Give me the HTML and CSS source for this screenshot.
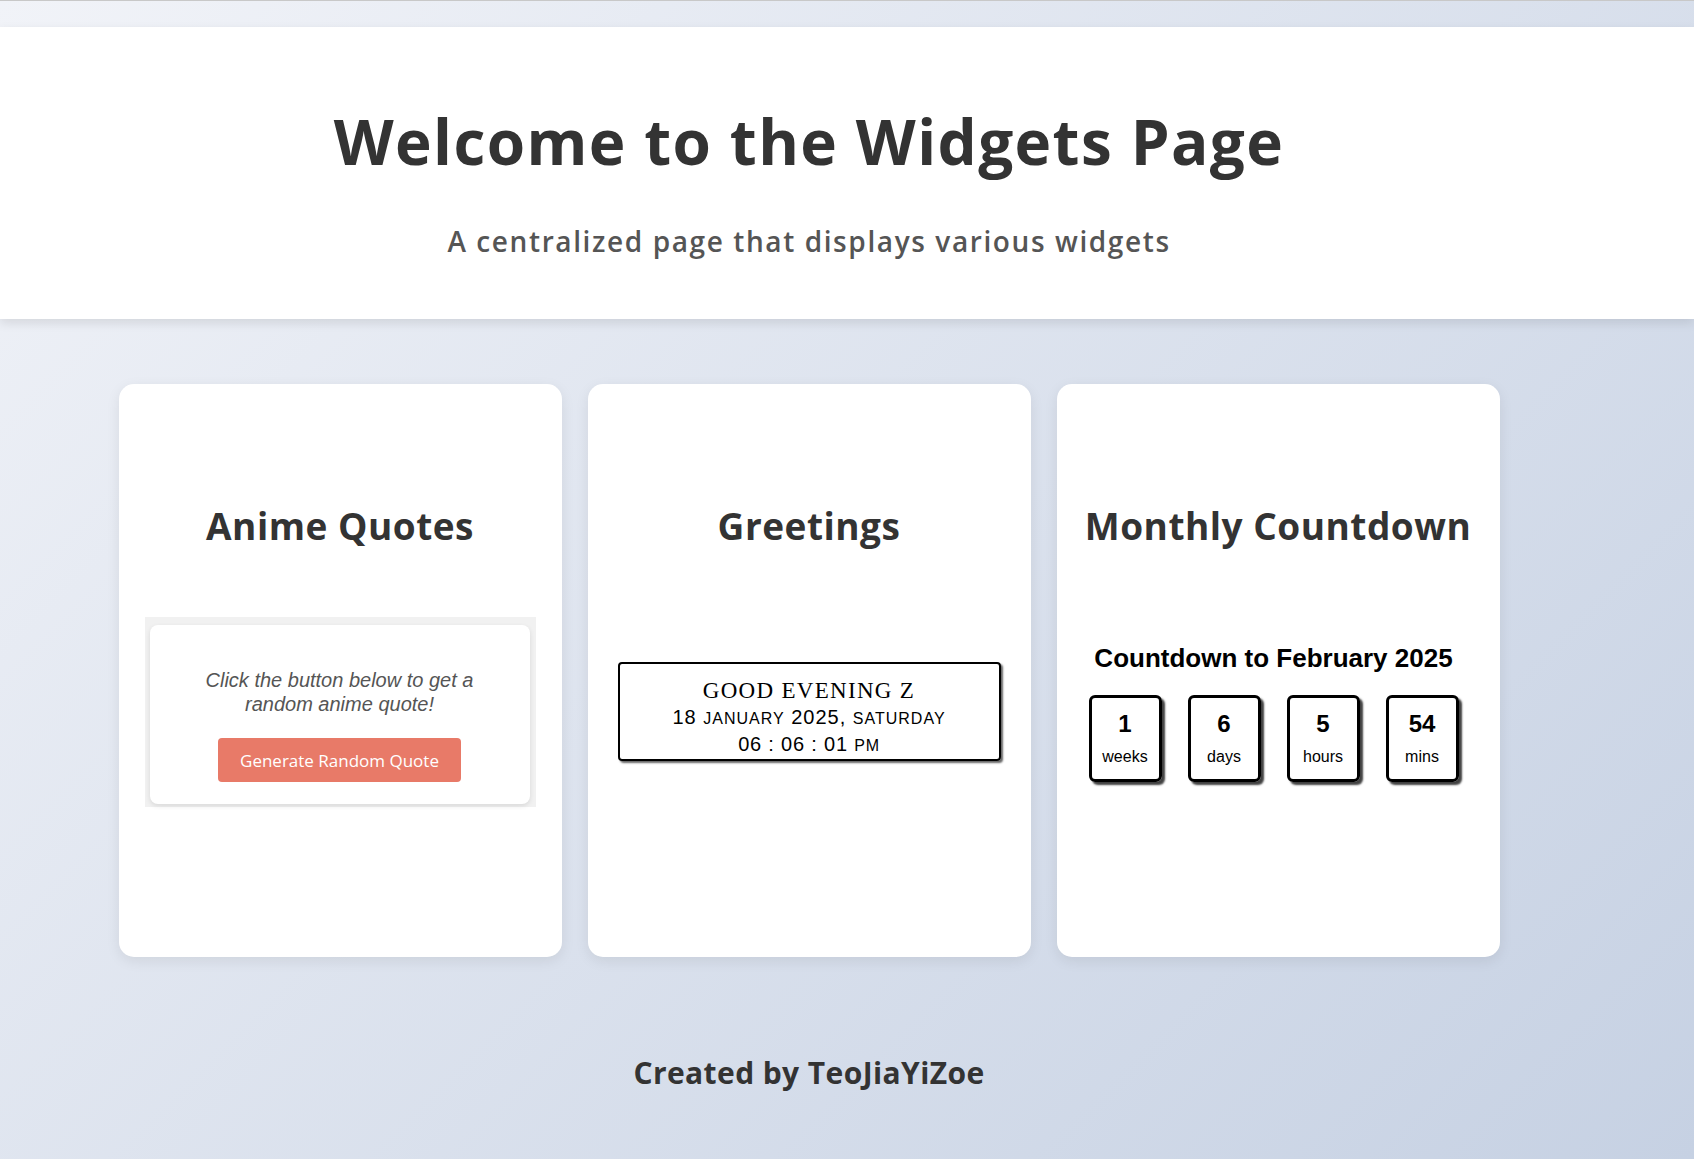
FILE: index.html
```html
<!DOCTYPE html>
<html lang="en">
<head>
<meta charset="utf-8">
<title>Widgets Page</title>
<link rel="stylesheet" href="styles.css">
</head>
<body>
<header class="site-header">
  <h1 class="site-title">Welcome to the Widgets Page</h1>
  <p class="site-subtitle">A centralized page that displays various widgets</p>
</header>

<main class="cards">
  <section class="card">
    <h2 class="card-title">Anime Quotes</h2>
    <div class="card-body">
      <div class="quote-frame">
        <div class="quote-box">
          <p class="quote-text">Click the button below to get a random anime quote!</p>
          <button class="quote-btn" type="button">Generate Random Quote</button>
        </div>
      </div>
    </div>
  </section>

  <section class="card">
    <h2 class="card-title">Greetings</h2>
    <div class="card-body">
      <div class="greet-box">
        <div class="greet-hello">GOOD EVENING Z</div>
        <div class="greet-date">18 <span class="sc">January</span> 2025, <span class="sc">Saturday</span></div>
        <div class="greet-time">06 : 06 : 01 <span class="sc">pm</span></div>
      </div>
    </div>
  </section>

  <section class="card">
    <h2 class="card-title">Monthly Countdown</h2>
    <div class="card-body">
      <div class="countdown">
        <div class="countdown-title">Countdown to February 2025</div>
        <div class="countdown-row">
          <div class="cd-box"><span class="cd-num">1</span><span class="cd-label">weeks</span></div>
          <div class="cd-box"><span class="cd-num">6</span><span class="cd-label">days</span></div>
          <div class="cd-box"><span class="cd-num">5</span><span class="cd-label">hours</span></div>
          <div class="cd-box"><span class="cd-num">54</span><span class="cd-label">mins</span></div>
        </div>
      </div>
    </div>
  </section>
</main>

<footer class="site-footer">Created by TeoJiaYiZoe</footer>
</body>
</html>
```

FILE: styles.css
```css
html {
  min-height: 100%;
}

body {
  margin: 0;
  min-height: 100vh;
  border-top: 1px solid #c8c8c8;
  box-sizing: border-box;
  background: linear-gradient(135deg, #f1f3f8 0%, #c6d1e3 100%);
  font-family: "Open Sans", "Liberation Sans", sans-serif;
  color: #333;
}

.site-header {
  margin-top: 26px;
  background: #fff;
  box-shadow: 0 4px 10px rgba(0, 0, 0, 0.1);
  text-align: center;
  padding: 74px 76px 58px 0;
}

.site-title {
  margin: 0;
  font-size: 62px;
  line-height: 80px;
  font-weight: 700;
  letter-spacing: 1.4px;
  color: #333;
}

.site-subtitle {
  margin: 40px 0 0;
  font-size: 28px;
  line-height: 40px;
  font-weight: 600;
  letter-spacing: 1.6px;
  color: #555;
}

.cards {
  display: flex;
  justify-content: center;
  gap: 26px;
  padding: 65px 76px 0 0;
}

.card {
  width: 443px;
  height: 573px;
  background: #fff;
  border-radius: 15px;
  box-shadow: 0 4px 14px rgba(0, 0, 0, 0.08);
  box-sizing: border-box;
  padding: 0 26px;
  display: flex;
  flex-direction: column;
}

.card-title {
  margin: 112px 0 0;
  height: 74px;
  font-size: 37px;
  line-height: 60px;
  font-weight: 700;
  letter-spacing: 0.5px;
  text-align: center;
  color: #333;
}

.card-body {
  height: 284px;
  display: flex;
  align-items: center;
  justify-content: center;
}

/* Anime quotes */
.quote-frame {
  width: 100%;
  height: 190px;
  box-sizing: border-box;
  background: #f1f1f1;
  padding: 8px 6px 3px 5px;
}

.quote-box {
  height: 100%;
  box-sizing: border-box;
  background: #fff;
  border-radius: 8px;
  box-shadow: 0 2px 5px rgba(0, 0, 0, 0.1);
  padding: 0 40px;
  text-align: center;
  font-family: "Liberation Sans", Arial, sans-serif;
}

.quote-text {
  margin: 0;
  padding: 43px 0 22px;
  font-size: 20px;
  line-height: 24px;
  font-style: italic;
  color: #555;
}

.quote-btn {
  height: 44px;
  padding: 0 22px;
  border: none;
  border-radius: 4px;
  background: #e87a68;
  color: #fff;
  font-family: "Open Sans", sans-serif;
  font-size: 17px;
}

/* Greetings */
.greet-box {
  width: 383px;
  box-sizing: border-box;
  border: 2px solid #000;
  border-radius: 4px;
  box-shadow: 2px 2px 2px rgba(0, 0, 0, 0.6);
  padding: 13px 0 1px;
  text-align: center;
  color: #000;
  margin-top: -1px;
}

.greet-hello {
  font-family: "Liberation Serif", "Times New Roman", serif;
  font-size: 23px;
  line-height: 27px;
  letter-spacing: 1.3px;
}

.greet-date {
  font-family: "Liberation Sans", Arial, sans-serif;
  font-size: 20px;
  line-height: 27px;
  letter-spacing: 1px;
}

.greet-time {
  font-family: "Liberation Sans", Arial, sans-serif;
  font-size: 20px;
  line-height: 24px;
  letter-spacing: 0.8px;
}

.sc {
  font-size: 0.8em;
  text-transform: uppercase;
}

/* Countdown */
.countdown {
  font-family: "Liberation Sans", Arial, sans-serif;
  color: #000;
  text-align: center;
  padding-right: 9px;
  margin-top: 0;
}

.countdown-title {
  font-size: 26px;
  line-height: 30px;
  font-weight: 700;
}

.countdown-row {
  display: flex;
  justify-content: center;
  gap: 26px;
  margin-top: 22px;
}

.cd-box {
  width: 73px;
  height: 87px;
  box-sizing: border-box;
  border: 3px solid #000;
  border-radius: 6px;
  box-shadow: 3px 3px 2px rgba(0, 0, 0, 0.75);
  padding-top: 12px;
  display: flex;
  flex-direction: column;
  align-items: center;
}

.cd-num {
  font-size: 24px;
  line-height: 28px;
  font-weight: 700;
}

.cd-label {
  margin-top: 9px;
  font-size: 16px;
  line-height: 20px;
}

.site-footer {
  margin-top: 96px;
  padding-right: 76px;
  text-align: center;
  font-size: 30px;
  line-height: 40px;
  font-weight: 700;
  letter-spacing: 0.4px;
  color: #333;
  padding-bottom: 40px;
}
```
